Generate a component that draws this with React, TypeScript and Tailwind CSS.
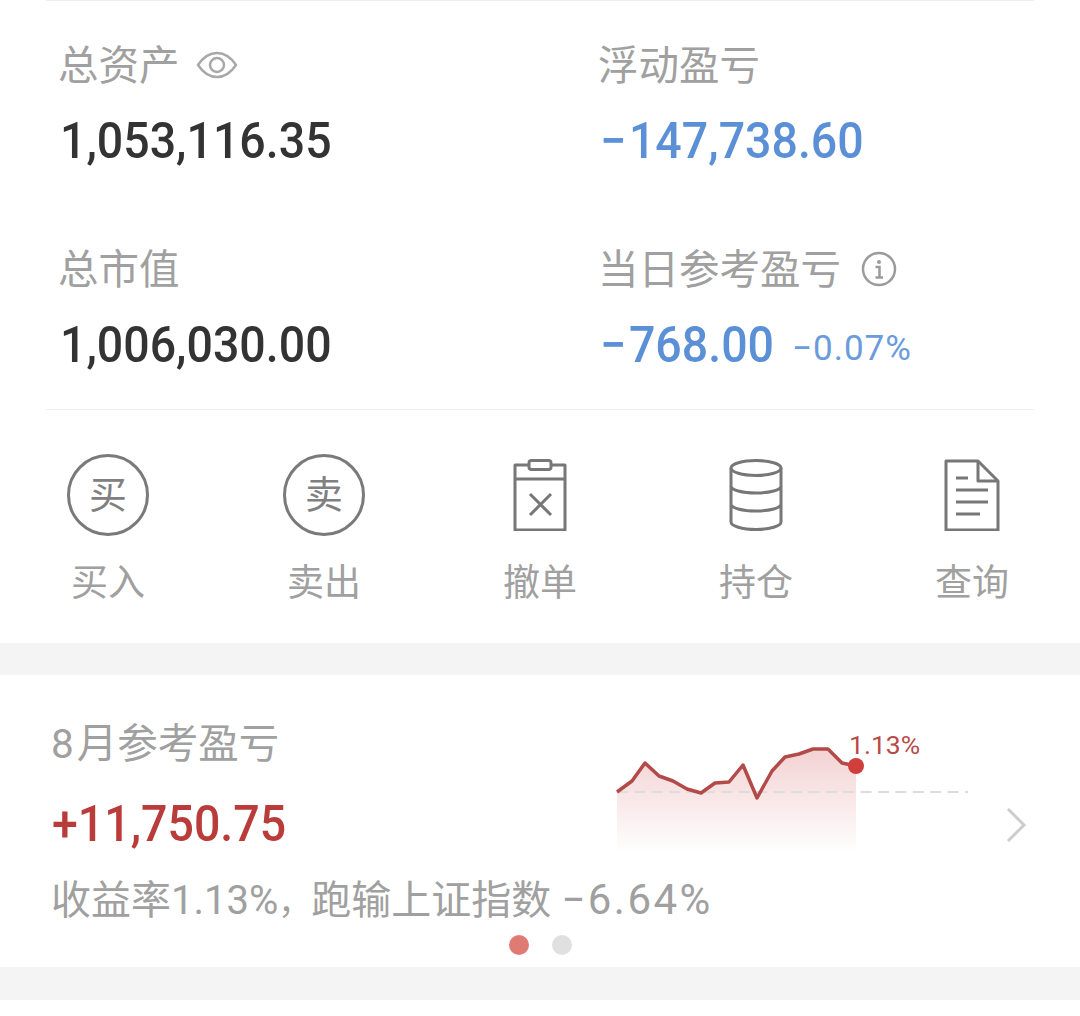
import React from "react";

const sans = "font-['Roboto','Noto_Sans_CJK_SC',sans-serif]";

function Stat({ label, value, color, extra, icon }: { label: string; value: string; color: string; extra?: string; icon?: React.ReactNode }) {
  const negative = value.startsWith("−");
  return (
    <div>
      <div className="flex h-[48px] items-center gap-[20px] text-[40.5px] leading-[48px] text-[#a0a0a0]">
        <span className="relative top-[1px] -ml-[1px]">{label}</span>
        {icon}
      </div>
      <div className="ml-[1px] mt-[21px] flex h-[60px] items-center">
        <span className={`relative top-[1px] inline-block w-[172px] origin-left scale-x-[0.93] whitespace-nowrap text-[50px] font-medium leading-[60px] ${color}`}>
          {negative && <span className="tracking-[3px]">−</span>}
          {negative ? value.slice(1) : value}
        </span>
        {extra && <span className="ml-[20px] whitespace-nowrap pt-[10px] text-[35px] tracking-[1px] text-[#6a9bdc]">{extra}</span>}
      </div>
    </div>
  );
}

const EyeIcon = () => (
  <svg width="42" height="32" viewBox="0 0 42 32" fill="none" stroke="#a8a8a8" strokeWidth="2.5" className="-ml-[4px]">
    <path d="M2 16C8 7 14 4 21 4s13 3 19 12c-6 9-12 12-19 12S8 25 2 16z" />
    <circle cx="21" cy="16" r="7" />
  </svg>
);

const InfoIcon = () => (
  <svg width="36" height="36" viewBox="0 0 36 36" fill="none" stroke="#9b9b9b" strokeWidth="2.5">
    <circle cx="18" cy="18" r="16" />
    <circle cx="18" cy="11" r="2" fill="#9b9b9b" stroke="none" />
    <path d="M14.5 16H18.5V26M14.5 26.5H22" />
  </svg>
);

const CircleIcon = ({ char }: { char: string }) => (
  <div className="flex h-[82px] w-[82px] items-center justify-center rounded-full border-[3px] border-[#7a7a7a] text-[38px] leading-none text-[#808080]">
    {char}
  </div>
);

const ClipboardIcon = () => (
  <svg width="54" height="72" viewBox="0 0 54 72" fill="none" stroke="#777777" strokeWidth="3" strokeLinejoin="round">
    <path d="M16 6H2V71H52V6H38" />
    <rect x="16" y="1.5" width="22" height="9" rx="2.5" />
    <path d="M2 20H52M17 35L38 56M38 35L17 56" />
  </svg>
);

const DatabaseIcon = () => (
  <svg width="54" height="72" viewBox="0 0 54 72" fill="none" stroke="#777777" strokeWidth="3">
    <ellipse cx="27" cy="9" rx="25" ry="7.5" />
    <path d="M2 9V63C2 67 13 70.5 27 70.5S52 67 52 63V9M2 27C2 31 13 34 27 34S52 31 52 27M2 45C2 49 13 52 27 52S52 49 52 45" />
  </svg>
);

const DocIcon = () => (
  <svg width="56" height="72" viewBox="0 0 56 72" fill="none" stroke="#777777" strokeWidth="3" strokeLinejoin="round">
    <path d="M2 2H34L54 22V71H2V2Z" />
    <path d="M34 2V22H54M12 19H24M12 31H44M12 43H44M12 55H36" />
  </svg>
);

const actions = [
  { label: "买入", icon: <CircleIcon char="买" /> },
  { label: "卖出", icon: <CircleIcon char="卖" /> },
  { label: "撤单", icon: <ClipboardIcon /> },
  { label: "持仓", icon: <DatabaseIcon /> },
  { label: "查询", icon: <DocIcon /> },
];

const points = "0,52 15,41 28,23 42,36 56,41 70,49 84,53 98,43 112,42 126,25 140,58 155,31 168,17 182,14 196,9 211,9 225,23 239,26";

const Sparkline = () => (
  <svg width="352" height="120" viewBox="0 0 352 120" fill="none" className="overflow-visible">
    <defs>
      <linearGradient id="fade" x1="0" y1="0" x2="0" y2="1">
        <stop offset="0" stopColor="#d9686a" stopOpacity="0.3" />
        <stop offset="1" stopColor="#d9686a" stopOpacity="0" />
      </linearGradient>
    </defs>
    <polygon points={`${points} 239,114 0,114`} fill="url(#fade)" />
    <line x1="0" y1="52" x2="351" y2="52" stroke="#dddddd" strokeWidth="2" strokeDasharray="11 6.4" />
    <polyline points={points} stroke="#b34a4a" strokeWidth="3.5" strokeLinejoin="round" />
    <circle cx="239" cy="26" r="8" fill="#d13f3c" />
  </svg>
);

export default function App() {
  return (
    <div className={`h-[1016px] w-[1080px] overflow-hidden bg-white ${sans}`}>
      <div className="mx-[46px] h-[410px] border-y border-[#eeeeee] pl-[13px] pt-[40px]">
        <div className="grid grid-cols-[540px_1fr] gap-y-[75px]">
          <Stat label="总资产" value="1,053,116.35" color="text-[#333333]" icon={<EyeIcon />} />
          <Stat label="浮动盈亏" value="−147,738.60" color="text-[#5b8fd6]" />
          <Stat label="总市值" value="1,006,030.00" color="text-[#333333]" />
          <Stat label="当日参考盈亏" value="−768.00" color="text-[#5b8fd6]" extra="−0.07%" icon={<InfoIcon />} />
        </div>
      </div>

      <div className="grid h-[233px] grid-cols-5 pt-[43px]">
        {actions.map((a) => (
          <div key={a.label} className="flex flex-col items-center">
            <div className="flex h-[84px] items-center justify-center">{a.icon}</div>
            <div className="mt-[23px] text-[37px] leading-[48px] text-[#a0a0a0]">{a.label}</div>
          </div>
        ))}
      </div>

      <div className="h-[32px] bg-[#f4f4f4]" />

      <div className="flex h-[292px] pl-[51px]">
        <div className="w-[566px] shrink-0">
          <div className="mt-[45px] text-[40.5px] leading-[48px] text-[#a0a0a0]"><span className="tracking-[3px]">8</span>月参考盈亏</div>
          <div className="ml-[1px] mt-[26px] block h-[60px] origin-left scale-x-[0.93] whitespace-nowrap text-[50px] font-medium leading-[60px] text-[#b93c3a]">+11,750.75</div>
          <div className="mt-[23px] whitespace-nowrap text-[40px] leading-[46px] text-[#a0a0a0]">
            收益率1.13%<span className="text-[33px]">，</span>跑输上证指数 <span className="text-[42px] tracking-[2.5px]">−6.64%</span>
          </div>
          <div className="ml-[1px] mt-[9px] flex w-[976px] justify-center gap-[23px]">
            <span className="h-[20px] w-[20px] rounded-full bg-[#e07a75]" />
            <span className="h-[20px] w-[20px] rounded-full bg-[#e0e0e0]" />
          </div>
        </div>
        <div className="relative mt-[65px] h-[120px] w-[352px] shrink-0">
          <Sparkline />
          <span className="absolute left-[232px] top-[-11px] text-[26.5px] leading-[32px] text-[#b84a4a]">1.13%</span>
        </div>
        <div className="ml-[36px] mt-[132px]">
          <svg width="22" height="36" viewBox="0 0 22 36" fill="none" stroke="#cccccc" strokeWidth="3">
            <path d="M3 2L19 18L3 34" />
          </svg>
        </div>
      </div>

      <div className="h-[33px] bg-[#f4f4f4]" />
    </div>
  );
}
